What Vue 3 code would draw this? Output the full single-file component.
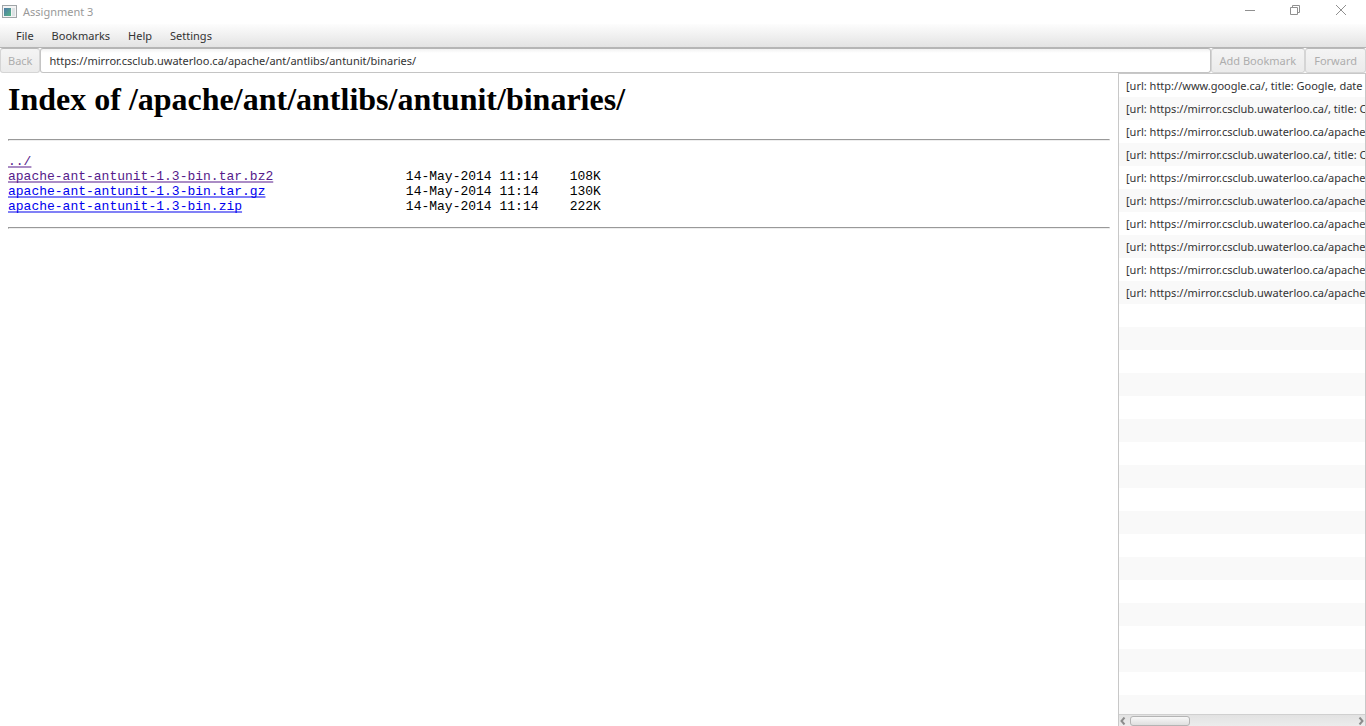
<script setup>
import { ref } from 'vue'

const menus = ['File', 'Bookmarks', 'Help', 'Settings']
const address = ref('https://mirror.csclub.uwaterloo.ca/apache/ant/antlibs/antunit/binaries/')
const files = [
  { name: 'apache-ant-antunit-1.3-bin.tar.bz2', date: '14-May-2014 11:14', size: '108K', visited: true },
  { name: 'apache-ant-antunit-1.3-bin.tar.gz', date: '14-May-2014 11:14', size: '130K', visited: false },
  { name: 'apache-ant-antunit-1.3-bin.zip', date: '14-May-2014 11:14', size: '222K', visited: false }
]
const home = '[url: https://mirror.csclub.uwaterloo.ca/, title: C'
const apache = '[url: https://mirror.csclub.uwaterloo.ca/apache'
const history = [
  '[url: http://www.google.ca/, title: Google, date',
  home, apache, home, apache, apache, apache, apache, apache, apache
]
</script>

<template>
  <div class="window">
    <header class="titlebar">
      <svg class="app-icon" width="16" height="14" viewBox="0 0 16 14" aria-hidden="true">
        <defs>
          <linearGradient id="pane" x1="0" y1="0" x2="1" y2="1">
            <stop offset="0" stop-color="#4f78a8" />
            <stop offset="1" stop-color="#55b584" />
          </linearGradient>
        </defs>
        <rect x="0.5" y="0.5" width="14" height="12" fill="#f4f4f4" stroke="#a0a5a8" />
        <rect x="2" y="3" width="7" height="8" fill="url(#pane)" />
        <rect x="10" y="3" width="3" height="8" fill="#dce2e4" />
      </svg>
      <span class="title">Assignment 3</span>
      <div class="controls">
        <button type="button" aria-label="Minimize">
          <svg width="12" height="12" viewBox="0 0 12 12"><path d="M2 6.5H12" /></svg>
        </button>
        <button type="button" aria-label="Restore">
          <svg width="12" height="12" viewBox="0 0 12 12"><path d="M1.5 3.5H8.5V10.5H1.5ZM3.5 3V1.5H10.5V8.5H9" /></svg>
        </button>
        <button type="button" aria-label="Close">
          <svg width="12" height="12" viewBox="0 0 12 12"><path d="M1 1L11 11M11 1L1 11" /></svg>
        </button>
      </div>
    </header>

    <nav class="menubar">
      <button v-for="m in menus" :key="m" type="button">{{ m }}</button>
    </nav>

    <div class="toolbar">
      <button type="button" disabled>Back</button>
      <input v-model="address" type="text" aria-label="Address" spellcheck="false" />
      <button type="button" disabled>Add Bookmark</button>
      <button type="button" disabled>Forward</button>
    </div>

    <div class="content">
      <main class="page">
        <h1>Index of /apache/ant/antlibs/antunit/binaries/</h1>
        <hr />
        <div class="listing">
          <a class="visited" href="#">../</a>
          <table>
            <tbody>
              <tr v-for="f in files" :key="f.name">
                <td class="name"><a href="#" :class="{ visited: f.visited }">{{ f.name }}</a></td>
                <td class="date">{{ f.date }}</td>
                <td>{{ f.size }}</td>
              </tr>
            </tbody>
          </table>
        </div>
        <hr />
      </main>

      <aside class="history">
        <ul>
          <li v-for="(h, i) in history" :key="i">{{ h }}</li>
        </ul>
        <div class="scrollbar">
          <button type="button" aria-label="Scroll left">
            <svg width="6" height="8" viewBox="0 0 6 8"><path d="M4.5 0.5L1.5 4L4.5 7.5" /></svg>
          </button>
          <div class="track"><div class="thumb"></div></div>
          <button type="button" aria-label="Scroll right">
            <svg width="6" height="8" viewBox="0 0 6 8"><path d="M1.5 0.5L4.5 4L1.5 7.5" /></svg>
          </button>
        </div>
      </aside>
    </div>
  </div>
</template>

<style>
body {
  margin: 0;
  background: #fff;
}
</style>

<style scoped>
.window {
  display: flex;
  flex-direction: column;
  height: 100vh;
  font: 11px/16px "Noto Sans", "Open Sans", sans-serif;
  color: #333;
}
button {
  margin: 0;
  padding: 0;
  border: 0;
  background: none;
  font: inherit;
  color: inherit;
}
svg {
  display: block;
}
.titlebar {
  display: flex;
  align-items: center;
  flex: none;
  height: 24px;
  padding-left: 2px;
}
.title {
  flex: 1;
  margin-left: 5px;
  color: #999;
}
.controls {
  display: flex;
  align-self: flex-start;
  padding-right: 2px;
}
.controls button {
  display: flex;
  align-items: center;
  justify-content: center;
  width: 46px;
  height: 20px;
}
.controls path {
  fill: none;
  stroke: #909090;
}
.menubar {
  display: flex;
  flex: none;
  box-sizing: border-box;
  height: 24px;
  padding-left: 7px;
  background: linear-gradient(#fdfdfd, #e3e3e3);
  border-bottom: 1px solid #b5b5b5;
}
.menubar button {
  padding: 0 9px;
}
.toolbar {
  display: flex;
  flex: none;
  height: 25px;
}
.toolbar button {
  padding: 0 7px;
  border: 1px solid #d5d5d5;
  border-top-color: #b9b9b9;
  border-radius: 3px;
  background: linear-gradient(#f4f4f4, #ebebeb);
  color: #adadad;
}
.toolbar input ~ button {
  padding: 0 8px;
}
.toolbar input {
  flex: 1;
  min-width: 0;
  box-sizing: border-box;
  padding: 0 8px;
  border: 1px solid #c4c4c4;
  border-top-color: #b5b5b5;
  border-radius: 3px;
  background: linear-gradient(#f2f2f2, #fff 4px);
  font: inherit;
  color: #333;
  outline: 0;
}
.content {
  display: flex;
  flex: 1;
  min-height: 0;
}
.page {
  flex: 1;
  min-width: 0;
  padding: 8px;
  color: #000;
}
h1 {
  margin: 0 0 22px;
  font: bold 32px/36px "Liberation Serif", serif;
}
hr {
  height: 0;
  margin: 0;
  border: 1px solid;
  border-color: #999 #eee #eee #999;
}
.listing {
  padding: 13px 0;
  font: 13px/15px "Liberation Mono", monospace;
}
.listing > a {
  display: table;
}
table {
  border-collapse: collapse;
}
td {
  padding: 0;
}
.name {
  width: 51ch;
}
.date {
  width: 21ch;
}
.page a {
  color: #0000ee;
  text-decoration: underline 2px #8080f6;
  text-decoration-skip-ink: none;
  text-underline-offset: 1px;
}
.page a.visited {
  color: #551a8b;
  text-decoration-color: #aa8cc5;
}
.history {
  display: flex;
  flex-direction: column;
  flex: none;
  box-sizing: border-box;
  width: 248px;
  border: 1px solid #c8c8c8;
  border-bottom: 0;
}
ul {
  flex: 1;
  min-height: 0;
  overflow: hidden;
  margin: 0;
  padding: 0;
  list-style: none;
  background: repeating-linear-gradient(#fff 0 23px, #f9f9f9 23px 46px);
}
li {
  overflow: hidden;
  padding-left: 7px;
  line-height: 23px;
  white-space: nowrap;
}
.scrollbar {
  display: flex;
  align-items: center;
  flex: none;
  box-sizing: border-box;
  height: 12px;
  padding: 0 1px;
  border-top: 1px solid #d0d0d0;
  background: linear-gradient(#e2e2e2, #ececec);
}
.scrollbar path {
  fill: none;
  stroke: #8c8c8c;
  stroke-width: 2;
}
.track {
  flex: 1;
  margin: 0 4px;
}
.thumb {
  box-sizing: border-box;
  width: 60px;
  height: 10px;
  border: 1px solid #b4b4b4;
  border-radius: 3px;
  background: linear-gradient(#f8f8f8, #dfdfdf);
}
</style>
